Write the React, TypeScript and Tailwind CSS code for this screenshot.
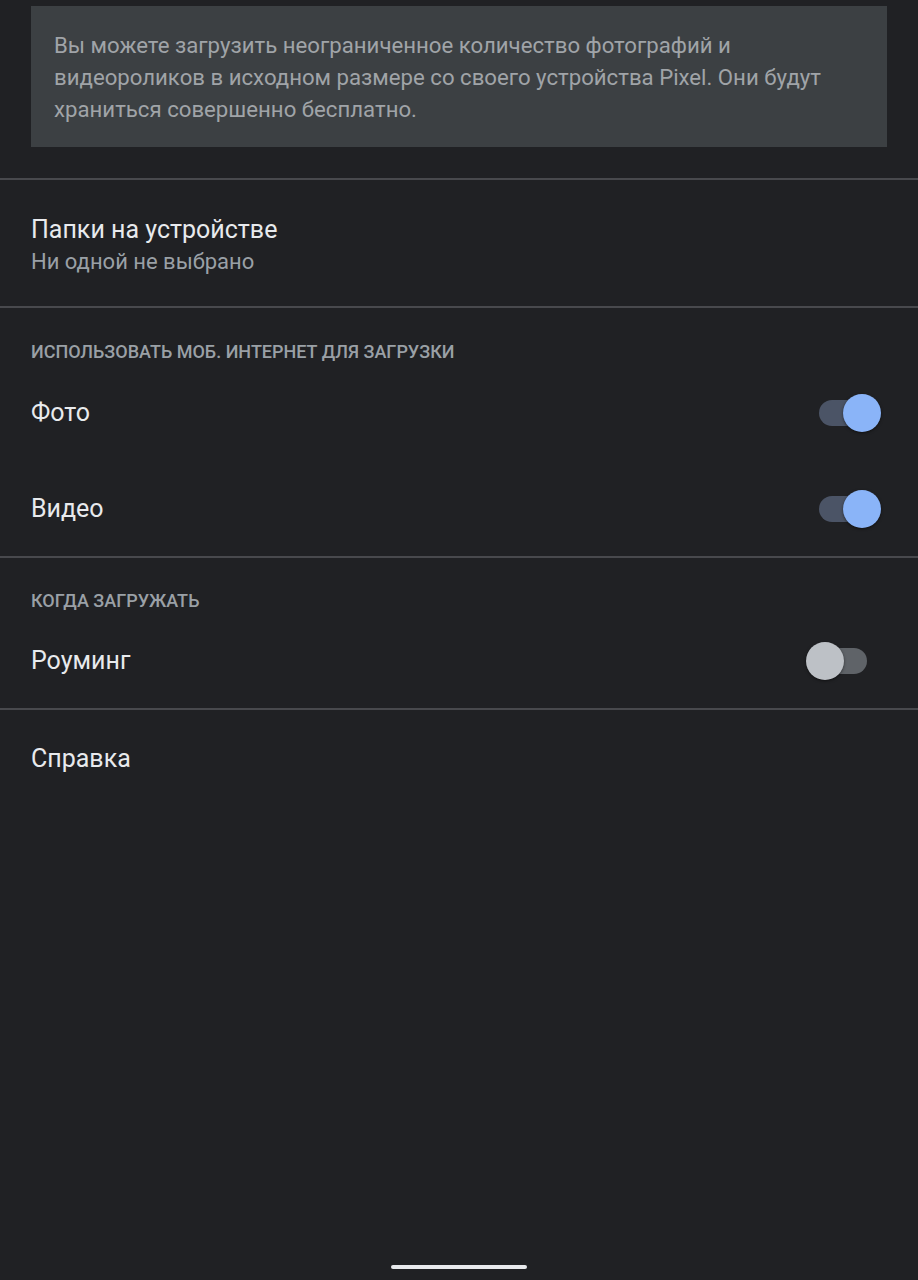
import React from 'react';

function Toggle({ on }: { on: boolean }) {
  return (
    <div className="relative w-[75px] h-[38px] shrink-0">
      <div
        className={
          on
            ? 'absolute left-[13px] top-[6px] w-[48px] h-[26px] rounded-full bg-[#4b5466]'
            : 'absolute left-[13px] top-[6px] w-[48px] h-[26px] rounded-full bg-[#5f6368]'
        }
      />
      <div
        className={
          on
            ? 'absolute right-0 top-0 w-[38px] h-[38px] rounded-full bg-[#8ab4f8] shadow-[0_1px_3px_rgba(0,0,0,0.5)]'
            : 'absolute left-0 top-0 w-[38px] h-[38px] rounded-full bg-[#bdc1c6] shadow-[0_1px_3px_rgba(0,0,0,0.5)]'
        }
      />
    </div>
  );
}

function Divider() {
  return <div className="h-[2px] bg-[#48494d]" />;
}

function SectionHeader({ children, first }: { children: React.ReactNode; first?: boolean }) {
  return (
    <div
      className={
        first
          ? 'px-[31px] pt-[32px] text-[18px] leading-[24px] font-medium uppercase text-[#9aa0a6]'
          : 'px-[31px] pt-[31px] text-[18px] leading-[24px] font-medium uppercase text-[#9aa0a6]'
      }
    >
      {children}
    </div>
  );
}

function SwitchRow({ label, on, height }: { label: string; on: boolean; height: 'a' | 'b' | 'c' }) {
  const h = height === 'a' ? 'h-[97px]' : height === 'b' ? 'h-[96px]' : 'h-[95px]';
  return (
    <div className={h + ' pl-[31px] pr-[37px] flex items-center justify-between'}>
      <span className="text-[25px] text-[#e8eaed]">{label}</span>
      <Toggle on={on} />
    </div>
  );
}

export default function App() {
  return (
    <div
      className="h-[1280px] bg-[#202124] flex flex-col overflow-hidden"
      style={{ fontFamily: 'Roboto, "Noto Sans", sans-serif' }}
    >
      {/* Info card */}
      <div className="mt-[6px] mx-[31px] bg-[#3c4043] px-[23px] pt-[23px] pb-[22px]">
        <p className="text-[22.2px] leading-[32px] text-[#a0a4a8] whitespace-nowrap">
          Вы можете загрузить неограниченное количество фотографий и
          <br />
          видеороликов в исходном размере со своего устройства Pixel. Они будут
          <br />
          храниться совершенно бесплатно.
        </p>
      </div>

      <div className="h-[31px]" />
      <Divider />

      {/* Folders */}
      <div className="px-[31px] pt-[34px] pb-[30px]">
        <div className="text-[25px] leading-[32px] text-[#e8eaed]">Папки на устройстве</div>
        <div className="mt-[2px] text-[22px] leading-[28px] text-[#9aa0a6]">Ни одной не выбрано</div>
      </div>
      <Divider />

      <SectionHeader first>Использовать моб. интернет для загрузки</SectionHeader>
      <SwitchRow label="Фото" on height="a" />
      <SwitchRow label="Видео" on height="c" />
      <Divider />

      <SectionHeader>Когда загружать</SectionHeader>
      <SwitchRow label="Роуминг" on={false} height="c" />
      <Divider />

      <div className="h-[98px] px-[31px] flex items-center">
        <span className="text-[25px] text-[#e8eaed]">Справка</span>
      </div>

      {/* Gesture bar */}
      <div className="mt-auto pb-[11px] flex justify-center">
        <div className="w-[136px] h-[4px] rounded-full bg-[#e8eaed]" />
      </div>
    </div>
  );
}
